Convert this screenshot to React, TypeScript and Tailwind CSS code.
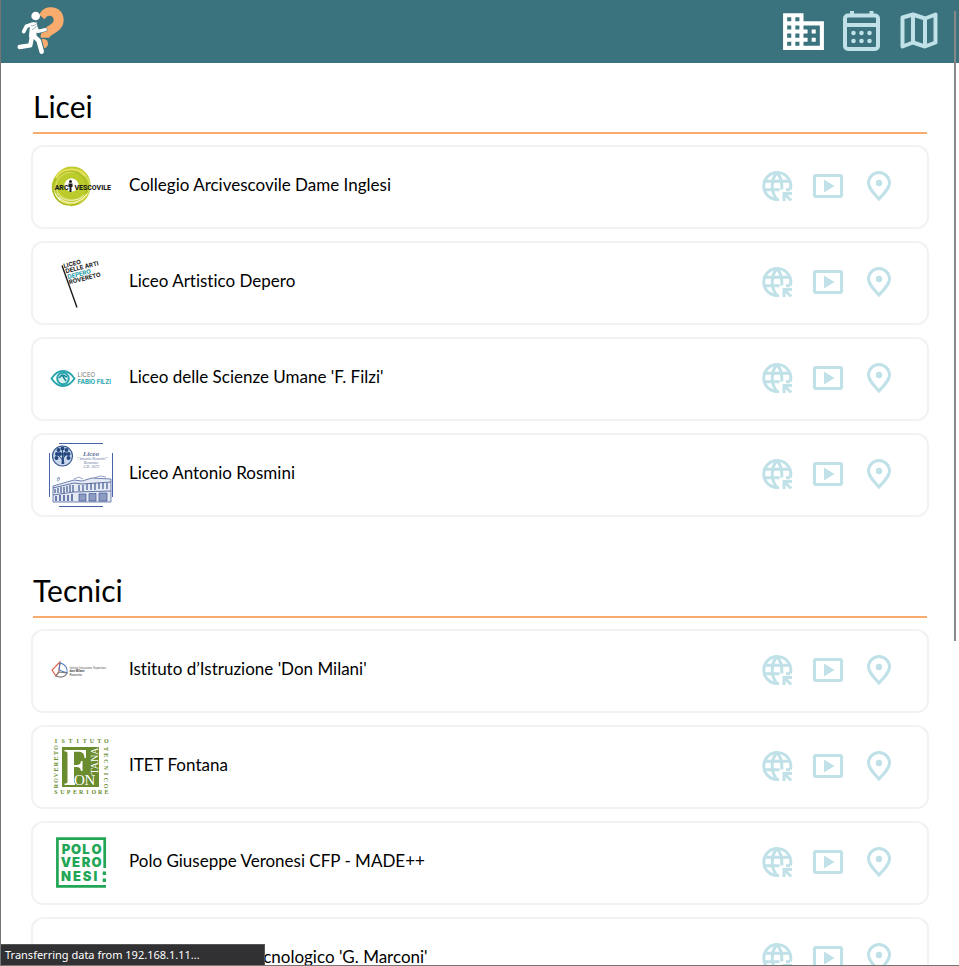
import type { ReactNode } from "react";
import { MdDomain } from "react-icons/md";

const ORANGE = "#f7ac6e";

function BrandLogo() {
  return (
    <svg viewBox="48 18 150 150" className="size-[50px]" aria-hidden="true">
      <path
        d="M118 44C126 27 140 22 153 22c22 0 38 15 38 38 0 21-14 32-27 40-9 5-14 8-16 13h-26c-1-18 10-28 24-36 10-6 15-10 15-18 0-7-5-12-12-12-8 0-12 5-15 11z"
        fill={ORANGE}
      />
      <circle cx="130" cy="131" r="14" fill={ORANGE} />
      <g stroke="#3a727d" strokeLinecap="round" strokeLinejoin="round" fill="none">
        <path d="M101 76l-3 30 18 16 9 33" strokeWidth="20" />
        <path d="M106 80l8 14 22-5" strokeWidth="13" />
      </g>
      <g stroke="#fff" strokeLinecap="round" strokeLinejoin="round" fill="none">
        <path d="M101 78l-3 28" strokeWidth="22" />
        <path d="M100 107l16 15 9 33" strokeWidth="14" />
        <path d="M96 108l-5 28-32 5" strokeWidth="13" />
        <path d="M97 73l-18 6-8 16" strokeWidth="11" />
        <path d="M106 80l8 14 22-5" strokeWidth="10" />
      </g>
      <circle cx="107" cy="48" r="13" fill="#fff" />
      <path d="M90 72l22-5-4 13-18 6z" fill="#fff" />
      <path d="M93 77c8 1 14-2 19-8M96 88c8-1 10-4 12-10" stroke="#3a727d" strokeWidth="1.5" fill="none" />
    </svg>
  );
}

function CalendarIcon() {
  return (
    <svg viewBox="0 0 50 50" className="size-[50px]" fill="none" stroke="currentColor" strokeWidth="4" aria-hidden="true">
      <rect x="9" y="9.500" width="33" height="33.500" rx="3" />
      <path d="M16 5v5M35.500 5v5M9 19h33" />
      <g fill="currentColor" stroke="none">
        {[17.5, 25.5, 33.5].map((x) => (
          <g key={x}>
            <circle cx={x} cy="27" r="2.300" />
            <circle cx={x} cy="35" r="2.300" />
          </g>
        ))}
      </g>
    </svg>
  );
}

function MapIcon() {
  return (
    <svg viewBox="0 0 50 50" className="size-[50px]" fill="none" stroke="currentColor" strokeWidth="4" strokeLinejoin="round" aria-hidden="true">
      <path d="M8.500 11.500L19 8.500l12 4 10.500-4V36.500L31 40.500 19 36.500 8.500 40.500zM19 8.500v28M31 12.500v28" />
    </svg>
  );
}

function GlobeIcon() {
  return (
    <svg viewBox="0 0 36 36" className="size-9" fill="none" stroke="currentColor" strokeWidth="3" aria-hidden="true">
      <path d="M20 31.400A13.500 13.500 0 1 1 31.300 21.500" />
      <path d="M18 4.500c-3 3.500-4.800 8-4.800 13.500s1.800 10 4.800 13.500M18 4.500c3 3.500 4.800 8 4.800 13.500v3.500" />
      <path d="M5.500 13.200h25M5.500 21.800h15M27 21.800h4" />
      <path d="M23.500 24H33v3h-4.300l4.500 4.500-2 2-4.700-4.500V33h-3z" fill="currentColor" stroke="none" />
    </svg>
  );
}

function VideoIcon() {
  return (
    <svg viewBox="0 0 36 36" className="size-9" fill="none" stroke="currentColor" strokeWidth="3" aria-hidden="true">
      <rect x="4.500" y="7.500" width="27" height="21" rx="1.500" />
      <path d="M14 11.500v13l10.500-6.500z" fill="currentColor" stroke="none" />
    </svg>
  );
}

function PinIcon() {
  return (
    <svg viewBox="0 0 36 36" className="size-9" fill="none" stroke="currentColor" strokeWidth="3" aria-hidden="true">
      <path d="M18 31C12 24.500 7.500 20 7.500 15a10.500 10.500 0 0 1 21 0C28.500 20 24 24.500 18 31z" />
      <circle cx="18" cy="15" r="3.200" fill="currentColor" stroke="none" />
    </svg>
  );
}

function ArcivescovileLogo() {
  return (
    <svg viewBox="0 0 64 64" className="size-16" aria-hidden="true">
      <g fill="none">
        <circle cx="23" cy="30" r="12.500" stroke="#bccb2c" strokeWidth="12" />
        <circle cx="22" cy="32" r="18.500" stroke="#c3cf3a" strokeWidth="1.500" strokeDasharray="30 3 17 2" />
        <ellipse cx="24" cy="31" rx="17" ry="14" stroke="#dde06a" strokeWidth="1.200" />
        <ellipse cx="21" cy="33" rx="17" ry="17" stroke="#a9bd22" strokeWidth="1.500" />
        <path d="M7 23c5-10 22-12 30-2M12 45c8 6 20 3 26-6" stroke="#e6df58" strokeWidth="2" />
        <path d="M10 42c7 8 20 8 28-3M8 38c5 9 19 10 27 2" stroke="#fff" strokeWidth=".7" />
      </g>
      <circle cx="22" cy="30" r="6.500" fill="#fff" />
      <g fill="#1d1d1b" fontFamily="Roboto, sans-serif" fontWeight="800" fontSize="7">
        <text x="19.500" y="35" textAnchor="end">ARC</text>
        <text x="62" y="35" textAnchor="end">VESCOVILE</text>
      </g>
      <circle cx="21.500" cy="26.500" r="1.500" fill="#1d1d1b" />
      <path d="M19.500 28.500h4v3.500h-1v5h-2v-5h-1z" fill="#1d1d1b" />
    </svg>
  );
}

function DeperoLogo() {
  return (
    <svg viewBox="0 0 64 64" className="size-16" aria-hidden="true">
      <path d="M13 14.500l15 42" stroke="#1a1a1a" strokeWidth="1.400" />
      <g fontFamily="Inter, sans-serif" fontWeight="700" fontSize="6" fill="#1a1a1a">
        <text transform="translate(15 17) rotate(-14)">LICEO</text>
        <text transform="translate(17 22.300) rotate(-14)">DELLE ARTI</text>
        <text transform="translate(19 28) rotate(-14)" fill="#1b9cab">DEPERO</text>
        <text transform="translate(20.500 33.300) rotate(-14)">ROVERETO</text>
      </g>
    </svg>
  );
}

function FilziLogo() {
  return (
    <svg viewBox="0 0 64 64" className="size-16" aria-hidden="true">
      <path d="M2.500 31.500C6 26 10 24 14 24s8 2 11.500 7.500C22 37 18 39 14 39S6 37 2.500 31.500z" fill="none" stroke="#27a5ad" strokeWidth="1.900" />
      <circle cx="14" cy="31.500" r="5.800" fill="#d9f0f1" stroke="#27a5ad" strokeWidth="2" />
      <path d="M10 31l3-3 4 6M14 28l4 2" stroke="#178b95" strokeWidth="1.500" fill="none" />
      <text x="28.500" y="29.500" fill="#777" fontFamily="Inter, sans-serif" fontSize="6">LICEO</text>
      <text x="28.500" y="37" fill="#27a5ad" fontFamily="Inter, sans-serif" fontWeight="700" fontSize="6">FABIO FILZI</text>
    </svg>
  );
}

function RosminiLogo() {
  return (
    <svg viewBox="0 0 64 64" className="size-16" aria-hidden="true">
      <path d="M10 .5h44M10 63.500h44M.5 10v44M63.500 10v44" stroke="#4766a3" />
      <circle cx="13.500" cy="13" r="10" fill="#c9d6ec" stroke="#34558f" strokeWidth="1.200" />
      <path d="M12.500 21l.6-9h1.400l.8 9z" fill="#24477f" />
      <path d="M13.500 17l-5-6M13.500 16l5-6M13.500 15V6" stroke="#24477f" />
      <g fill="#24477f">
        {[[8, 11], [9.5, 7], [13.5, 5.5], [17.5, 7], [19.5, 11], [11, 11], [16, 11], [7.5, 15], [19.5, 15]].map(([x, y]) => (
          <circle key={`${x}-${y}`} cx={x} cy={y} r="2" />
        ))}
      </g>
      <g fill="#5b6f9c" fontFamily="Liberation Serif, serif" fontStyle="italic" textAnchor="middle">
        <text x="42" y="12.500" fontSize="7" fontWeight="700">Liceo</text>
        <text x="43" y="16.500" fontSize="4">“Antonio Rosmini”</text>
        <text x="42" y="20.500" fontSize="4">Rovereto</text>
        <text x="42" y="24.500" fontSize="4">A.D. 1672</text>
      </g>
      <path d="M8 36c3-5 3 2 1 2s0-3 2-3M25 36l5-2 4 2M45 35l6-2 6 1" stroke="#7d8fb8" fill="none" strokeWidth=".8" />
      <path d="M4 43l21-6 8 1 10-3 19 1v23H4z" fill="#e6eaf4" stroke="#4d65a0" strokeWidth=".8" />
      <path d="M4 45l21-5 8 1 29-2M4 52l21-3 37-1" stroke="#40588f" strokeWidth=".8" fill="none" />
      <path d="M6 46v4M9 45v5M12 44v6M15 44v6M18 43v6M21 42v7M24 42v7M30 42v6M34 42v6M38 41v6M42 40v7M46 40v7M50 40v6M54 40v6M58 40v6" stroke="#40588f" strokeWidth="1.200" />
      <path d="M7 53v5M11 52v6M15 52v6M19 52v6M23 51v7" stroke="#52689e" strokeWidth="1.700" />
      <path d="M30 51h7v7h-7zM40 50.500h7v7.500h-7zM50 50h8v8h-8z" fill="#8c9cc2" stroke="#40588f" strokeWidth=".7" />
    </svg>
  );
}

function DonMilaniLogo() {
  return (
    <svg viewBox="0 0 64 64" className="size-16" aria-hidden="true">
      <g fill="none" strokeWidth="1.100">
        <path d="M11 23l-8 8 4 6 3-5z" stroke="#df5e45" />
        <path d="M11 24c5 1 8 5 7 10l-8-3z" stroke="#4b78bd" />
        <path d="M7 37l3-4 8 1c-2 4-6 5-11 3z" stroke="#777" />
      </g>
      <g fontFamily="Liberation Sans, sans-serif" fill="#333">
        <text x="20.500" y="29.500" fontSize="3" fill="#555">Istituto Istruzione Superiore</text>
        <text x="20.500" y="33.300" fontSize="3" fontWeight="700">don Milani</text>
        <text x="20.500" y="37" fontSize="3">Rovereto</text>
      </g>
    </svg>
  );
}

function FontanaLogo() {
  const green = "#6a8b2e";
  return (
    <svg viewBox="0 0 64 64" className="size-16" aria-hidden="true">
      <g fill={green} fontFamily="Liberation Serif, serif" fontWeight="700" fontSize="6" textAnchor="middle">
        {"ISTITUTO".split("").map((c, i) => (
          <text key={i} x={7 + i * 7.2} y="8">{c}</text>
        ))}
        {"SUPERIORE".split("").map((c, i) => (
          <text key={i} x={7 + i * 6.3} y="59">{c}</text>
        ))}
        {"ROVERETO".split("").map((c, i) => (
          <text key={i} transform={`translate(9 ${51 - i * 5.5}) rotate(-90)`}>{c}</text>
        ))}
        {"TECNICO".split("").map((c, i) => (
          <text key={i} transform={`translate(55 ${14 + i * 6.2}) rotate(90)`}>{c}</text>
        ))}
      </g>
      <rect x="13" y="12" width="37" height="40" fill={green} />
      <path d="M15.500 15H37v8h-1.500c-.5-4-1.500-6.200-6-6.200H25V30h2.500c3 0 4-1 4.500-4h1.500v10H32c-.5-3-1.500-4-4.500-4H25v14c0 2 1 2.500 2.500 2.500V50H15.500v-1.500c2.500 0 3-.5 3-2.500V19c0-2-.5-2.500-3-2.500z" fill="#fff" />
      <path d="M26 38h6v12h-6z" fill={green} />
      <g fill="#fff" fontFamily="Liberation Serif, serif">
        <text x="25" y="50" fontSize="15">O</text>
        <text x="35.500" y="50" fontSize="15">N</text>
        <text transform="translate(48.500 39.500) rotate(-90)" fontSize="10">TANA</text>
      </g>
    </svg>
  );
}

function VeronesiLogo() {
  const green = "#22a656";
  return (
    <svg viewBox="0 0 64 64" className="size-16" aria-hidden="true">
      <path d="M55.700 37V7.700H8.400v47.600H57" fill="none" stroke={green} strokeWidth="2.700" />
      <path d="M53.700 40.500H57V44h-3.300zM53.700 47.500H57V51h-3.300z" fill={green} />
      <g fill={green} fontFamily="Inter, sans-serif" fontWeight="900" fontSize="13" textAnchor="middle">
        {["POLO", "VERO", "NESI"].map((row, r) =>
          row.split("").map((c, i) => (
            <text key={row + i} x={(r === 2 ? [17, 28, 38, 46.5] : [17, 27, 37, 47.5])[i]} y={22.5 + r * 13.8}>{c}</text>
          )),
        )}
      </g>
    </svg>
  );
}

type School = { name: string; logo: ReactNode };

const sections: { title: string; schools: School[] }[] = [
  {
    title: "Licei",
    schools: [
      { name: "Collegio Arcivescovile Dame Inglesi", logo: <ArcivescovileLogo /> },
      { name: "Liceo Artistico Depero", logo: <DeperoLogo /> },
      { name: "Liceo delle Scienze Umane 'F. Filzi'", logo: <FilziLogo /> },
      { name: "Liceo Antonio Rosmini", logo: <RosminiLogo /> },
    ],
  },
  {
    title: "Tecnici",
    schools: [
      { name: "Istituto d’Istruzione 'Don Milani'", logo: <DonMilaniLogo /> },
      { name: "ITET Fontana", logo: <FontanaLogo /> },
      { name: "Polo Giuseppe Veronesi CFP - MADE++", logo: <VeronesiLogo /> },
      { name: "Istituto Tecnico Tecnologico 'G. Marconi'", logo: null },
    ],
  },
];

function SchoolCard({ name, logo }: School) {
  return (
    <li className="flex h-[84px] items-center rounded-xl border-2 border-[#f2f2f2] bg-white pr-[30px] pl-4">
      <div className="size-16 shrink-0">{logo}</div>
      <h2 className="mb-1 ml-4 flex-1 text-[17px] leading-6">{name}</h2>
      <div className="mb-0.5 flex gap-[15px] text-[#bfe1e7]">
        <a href="#sito" aria-label={`Sito web di ${name}`}><GlobeIcon /></a>
        <a href="#video" aria-label={`Video di ${name}`}><VideoIcon /></a>
        <a href="#mappa" aria-label={`Posizione di ${name}`}><PinIcon /></a>
      </div>
    </li>
  );
}

export default function App() {
  return (
    <div className="relative flex h-screen flex-col overflow-hidden border-b border-l border-[#767676] bg-white font-['Lato',sans-serif] text-black [font-variant-ligatures:none]">
      <header className="flex h-[63px] shrink-0 items-center justify-between bg-[#3a727d] px-[15px] pb-px">
        <a href="#home" aria-label="Home"><BrandLogo /></a>
        <nav className="flex items-center gap-2 text-[#bfe1e7]">
          <a href="#scuole" aria-label="Scuole" className="text-white"><MdDomain className="size-[49px]" /></a>
          <a href="#calendario" aria-label="Calendario"><CalendarIcon /></a>
          <a href="#mappa" aria-label="Mappa"><MapIcon /></a>
        </nav>
      </header>
      <main className="flex min-h-0 flex-1 flex-col gap-[54px] overflow-y-auto px-[30px] pt-6 [scrollbar-width:none]">
        {sections.map((section) => (
          <section key={section.title}>
            <h1 className="mx-0.5 mb-[11px] h-[47px] border-b-2 border-[#f7ac6e] text-[30px] leading-[38px]">{section.title}</h1>
            <ul className="flex flex-col gap-3">
              {section.schools.map((school) => (
                <SchoolCard key={school.name} {...school} />
              ))}
            </ul>
          </section>
        ))}
      </main>
      <div className="absolute top-[11px] right-[3px] h-[630px] w-0.5 bg-[#888]" />
      <div role="status" className="absolute bottom-0 left-0 flex h-[21px] w-[264px] items-center border-t border-r border-[#555] bg-[#313133] pl-1 font-['Noto_Sans',sans-serif] text-[11px] text-white">
        Transferring data from 192.168.1.11...
      </div>
    </div>
  );
}
